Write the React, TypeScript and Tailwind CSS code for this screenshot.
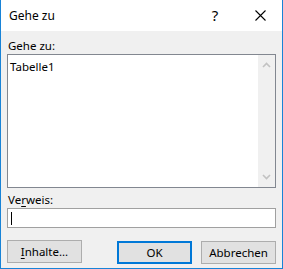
const font = { fontFamily: '"Noto Sans", "Open Sans", sans-serif' };

const Chevron = ({ down }: { down?: boolean }) => (
  <svg width="9" height="6" viewBox="0 0 9 6" className="block">
    <path
      d={down ? 'M1 1 L4.5 4.5 L8 1' : 'M1 5 L4.5 1.5 L8 5'}
      fill="none"
      stroke="#c2c2c2"
      strokeWidth="1.6"
    />
  </svg>
);

const CloseGlyph = () => (
  <svg width="11" height="11" viewBox="0 0 11 11" className="block">
    <path d="M0.5 0.5 L10.5 10.5 M10.5 0.5 L0.5 10.5" stroke="#000" strokeWidth="1.1" fill="none" />
  </svg>
);

const WinButton = ({ children, primary }: { children: React.ReactNode; primary?: boolean }) => (
  <button
    className={`h-[23px] w-[75px] bg-[#e1e1e1] text-[11.5px] leading-none text-black ${
      primary ? 'border-2 border-[#0078d7]' : 'border border-[#adadad]'
    }`}
  >
    {children}
  </button>
);

export default function App() {
  return (
    <div
      className="flex h-[269px] w-[283px] flex-col border-x border-b border-[#1883d7] bg-[#f0f0f0] text-black"
      style={font}
    >
      {/* Title bar */}
      <div className="flex h-[31px] shrink-0 items-center bg-white">
        <span className="pl-[8px] text-[12px]">Gehe zu</span>
        <div className="ml-auto flex items-center">
          <span className="w-[46px] pl-[4px] text-center text-[15px] leading-none">?</span>
          <span className="flex w-[46px] justify-center pl-[6px] pr-[4px]">
            <CloseGlyph />
          </span>
        </div>
      </div>

      {/* Body */}
      <div className="flex flex-1 flex-col px-[6px]">
        <div className="mt-[6px] pl-[1px] text-[11.5px] leading-[17px]">Gehe zu:</div>
        <div className="flex h-[134px] border border-[#828790] bg-white">
          <div className="flex-1 pl-[2px] pt-[4px] text-[11.5px] leading-[15px]">Tabelle1</div>
          <div className="flex w-[17px] flex-col items-center justify-between bg-[#f0f0f0] py-[7px]">
            <Chevron />
            <Chevron down />
          </div>
        </div>

        <div className="mt-[4px] pl-[1px] text-[11.5px] leading-[16px]">
          Ve<span className="underline underline-offset-2">r</span>weis:
        </div>
        <div className="flex h-[20px] items-center border border-[#a0a0a0] bg-white pl-[3px]">
          <div className="h-[13px] w-px bg-black" />
        </div>

        <div className="mt-[11px] flex items-center">
          <WinButton>
            <span className="underline underline-offset-2">I</span>nhalte...
          </WinButton>
          <div className="ml-[35px]">
            <WinButton primary>OK</WinButton>
          </div>
          <div className="ml-auto">
            <WinButton>Abbrechen</WinButton>
          </div>
        </div>
      </div>
    </div>
  );
}
